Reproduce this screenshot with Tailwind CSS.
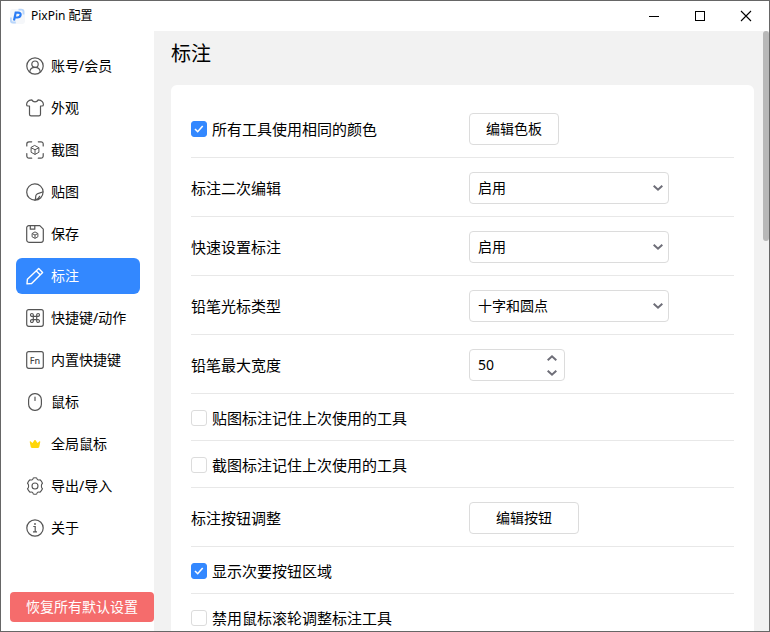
<!DOCTYPE html>
<html lang="zh-CN">
<head>
<meta charset="utf-8">
<meta name="viewport" content="width=device-width, initial-scale=1">
<title>PixPin 配置</title>
<script src="https://cdn.jsdelivr.net/npm/@tailwindcss/browser@4"></script>
</head>
<body class="flex h-screen flex-col overflow-hidden border border-[#666] bg-white font-['Noto_Sans','Noto_Sans_CJK_SC',sans-serif] text-sm text-black">

<header class="flex h-[30px] shrink-0 items-center pl-2">
  <svg class="mr-1.5 size-4" viewBox="0 0 16 16" fill="none" aria-hidden="true">
    <rect x="1" y="1" width="15" height="15" rx="3" fill="#f5f7fa"/>
    <path d="M9.500 1.700h2.700a2.300 2.300 0 0 1 2.300 2.300v2.500" stroke="#b9d6fb" stroke-width="1.800"/>
    <path d="M1.900 9.500v2.700a2.300 2.300 0 0 0 2.300 2.300h2.600" stroke="#b9d6fb" stroke-width="1.800"/>
    <path d="M5 12.500L6.700 4.600H9c2 0 2.900 1.100 2.600 2.500S10.100 9.500 8.300 9.500H6.100" stroke="#2b7df5" stroke-width="2.200"/>
  </svg>
  <span class="text-xs">PixPin 配置</span>
  <div class="ml-auto flex h-full">
    <button type="button" aria-label="最小化" class="grid w-[46px] place-items-center"><svg class="size-3" viewBox="0 0 12 12" stroke="#000" shape-rendering="crispEdges"><path d="M1 6.500h10"/></svg></button>
    <button type="button" aria-label="最大化" class="grid w-[46px] place-items-center"><svg class="size-3" viewBox="0 0 12 12" fill="none" stroke="#000" shape-rendering="crispEdges"><rect x="1.500" y="1.500" width="9" height="9"/></svg></button>
    <button type="button" aria-label="关闭" class="grid w-[46px] place-items-center"><svg class="size-3" viewBox="0 0 12 12" stroke="#000" stroke-width="1.100"><path d="M1 1l10 10M11 1L1 11"/></svg></button>
  </div>
</header>

<div class="flex min-h-0 flex-1">
  <aside class="flex w-[153px] shrink-0 flex-col justify-between pt-[17px] pb-[9px]">
    <nav class="flex flex-col gap-1.5 pr-3.5 pl-[15px]">
      <a href="#account" class="flex h-9 items-center gap-[7px] rounded-md pl-2.5">
        <svg class="size-[18px] shrink-0" viewBox="0 0 18 18" fill="none" stroke="#555" stroke-width="1.200"><circle cx="9" cy="9" r="8.200"/><circle cx="9" cy="7.200" r="3.200"/><path d="M3.700 15.100c.3-3 2.500-4.700 5.300-4.700s5 1.700 5.300 4.700"/></svg>
        账号/会员</a>
      <a href="#appearance" class="flex h-9 items-center gap-[7px] rounded-md pl-2.5">
        <svg class="size-[18px] shrink-0" viewBox="0 0 18 18" fill="none" stroke="#555" stroke-width="1.200" stroke-linejoin="round"><path d="M5.800.9c.7 1.300 1.800 1.900 3.200 1.900s2.500-.6 3.200-1.900c1.800.1 3.100.6 4.100 1.700.8.900 1.100 2 1.100 3.100 0 .8-.6 1.300-1.400 1.300h-1.500v8.300c0 1-.6 1.600-1.600 1.600H5.100c-1 0-1.600-.6-1.600-1.600V7H2C1.200 7 .6 6.500.6 5.700c0-1.100.3-2.200 1.100-3.100C2.700 1.500 4 1 5.800.9z"/></svg>
        外观</a>
      <a href="#capture" class="flex h-9 items-center gap-[7px] rounded-md pl-2.5">
        <svg class="size-[18px] shrink-0" viewBox="0 0 18 18" fill="none" stroke="#555" stroke-width="1.200" stroke-linecap="round" stroke-linejoin="round"><path d="M.8 5V3A2.200 2.200 0 0 1 3 .8h2.700M12.300.8H15A2.200 2.200 0 0 1 17.200 3v2M17.200 12.500V15a2.200 2.200 0 0 1-2.200 2.200h-2.700M5.700 17.200H3A2.200 2.200 0 0 1 .8 15v-2.500"/><path stroke-width="1" d="M9 4.600l3.900 2.100v4.600L9 13.400l-3.900-2.100V6.700zM5.300 6.900L9 8.700l3.700-1.800M9 8.700v4.500"/></svg>
        截图</a>
      <a href="#pin" class="flex h-9 items-center gap-[7px] rounded-md pl-2.5">
        <svg class="size-[18px] shrink-0" viewBox="0 0 18 18" fill="none" stroke="#555" stroke-width="1.200" stroke-linejoin="round"><path d="M17.100 8.800A8.200 8.200 0 1 0 9 17.200c1-1 .2-3.600 1.200-5.400 1.200-2.300 4.700-1.600 6.900-3z"/><path d="M17.100 8.800c0 4.600-3.500 8.400-8.100 8.400 1.600-.3 4-2.300 4.800-4.300"/></svg>
        贴图</a>
      <a href="#save" class="flex h-9 items-center gap-[7px] rounded-md pl-2.5">
        <svg class="size-[18px] shrink-0" viewBox="0 0 18 18" fill="none" stroke="#555" stroke-width="1.200" stroke-linejoin="round"><path d="M2.800.7h11l3.500 3.500v10.900a2.200 2.200 0 0 1-2.200 2.200H2.900a2.200 2.200 0 0 1-2.200-2.200V2.800A2.100 2.100 0 0 1 2.800.7z"/><path d="M4.300.8v3.400h4.500V.8"/><path stroke-width="1" d="M9 6.900l2.900 1.600v3.300L9 13.400l-2.900-1.600V8.500zM6.300 8.700L9 10l2.700-1.300M9 10v3.200"/></svg>
        保存</a>
      <a href="#annotate" aria-current="page" class="flex h-9 items-center gap-[7px] rounded-md bg-[#3388ff] pl-2.5 text-white">
        <svg class="size-[18px] shrink-0" viewBox="0 0 18 18" fill="none" stroke="#fff" stroke-width="1.400" stroke-linejoin="round"><path d="M1.400 12.300L12.700 1.500l3.900 3.900L5.600 16.500l-4.600.4zM10.300 3.900l3.900 3.900"/></svg>
        标注</a>
      <a href="#shortcuts" class="flex h-9 items-center gap-[7px] rounded-md pl-2.5">
        <svg class="size-[18px] shrink-0" viewBox="0 0 18 18" fill="none" stroke="#555" stroke-width="1.200"><rect x=".7" y=".7" width="16.600" height="16.600" rx="2"/><path d="M7.300 7.300h3.400v3.400H7.300zM7.300 7.300H6a1.400 1.400 0 1 1 1.300-1.400zM10.700 7.300V5.900a1.400 1.400 0 1 1 1.400 1.400zM10.700 10.700h1.400a1.400 1.400 0 1 1-1.400 1.400zM7.300 10.700v1.400A1.400 1.400 0 1 1 6 10.700z"/></svg>
        快捷键/动作</a>
      <a href="#builtin" class="flex h-9 items-center gap-[7px] rounded-md pl-2.5">
        <svg class="size-[18px] shrink-0" viewBox="0 0 18 18" aria-hidden="true"><rect x=".7" y=".7" width="16.600" height="16.600" rx="2" fill="none" stroke="#555" stroke-width="1.200"/><text x="9" y="12.500" text-anchor="middle" font-size="9" font-weight="500" fill="#444">Fn</text></svg>
        内置快捷键</a>
      <a href="#mouse" class="flex h-9 items-center gap-[7px] rounded-md pl-2.5">
        <svg class="size-[18px] shrink-0" viewBox="0 0 18 18" fill="none" stroke="#555" stroke-width="1.200" stroke-linecap="round"><rect x="2.600" y=".7" width="12.800" height="16.600" rx="6"/><path d="M9 4v3.500"/></svg>
        鼠标</a>
      <a href="#global-mouse" class="flex h-9 items-center gap-[7px] rounded-md pl-2.5">
        <svg class="size-[18px] shrink-0" viewBox="0 0 18 18" fill="#ffd60a"><path d="M3.800 6.600c.2-.4.600-.4.900-.1L6.500 8l1.900-2.700c.3-.5.900-.5 1.200 0L11.500 8l1.800-1.500c.3-.3.7-.3.900.1.100.2.100.4 0 .7l-.9 4.500c-.1.700-.5 1.200-1.300 1.200H6c-.8 0-1.200-.5-1.300-1.200l-.9-4.500c-.1-.3-.1-.5 0-.7z"/></svg>
        全局鼠标</a>
      <a href="#transfer" class="flex h-9 items-center gap-[7px] rounded-md pl-2.5">
        <svg class="size-[18px] shrink-0" viewBox="0 0 18 18" fill="none" stroke="#555" stroke-width="1.100" stroke-linejoin="round"><circle cx="9" cy="9" r="3"/><path d="M7.300 1c1.100-.4 2.300-.4 3.400 0 .2 1.600 1.600 2.500 3.300 1.800 1 .8 1.800 1.900 2.500 3.400-1.500 1.200-1.500 4.400 0 5.600-.7 1.500-1.500 2.600-2.500 3.400-1.700-.7-3.100.2-3.300 1.800-1.100.4-2.300.4-3.400 0-.2-1.600-1.600-2.500-3.300-1.800-1-.8-1.800-1.900-2.500-3.400 1.500-1.200 1.500-4.400 0-5.600C2.200 4.700 3 3.600 4 2.800c1.700.7 3.100-.2 3.300-1.800z"/></svg>
        导出/导入</a>
      <a href="#about" class="flex h-9 items-center gap-[7px] rounded-md pl-2.5">
        <svg class="size-[18px] shrink-0" viewBox="0 0 18 18" fill="none" stroke="#555" stroke-width="1.200"><circle cx="9" cy="9" r="8.200"/><path d="M7.300 7.500h1.900v5.300M7 12.900h4"/><circle cx="9" cy="5" r=".9" fill="#555" stroke="none"/></svg>
        关于</a>
    </nav>
    <button type="button" class="ml-[9px] h-[30px] rounded bg-[#f56c6c] text-white">恢复所有默认设置</button>
  </aside>

  <main class="min-w-0 flex-1 overflow-hidden bg-[#f2f2f2] pr-[9px] pl-[17px]">
    <h1 class="pt-2 pb-4 text-xl leading-[30px]">标注</h1>
    <form class="divide-y divide-[#e8e8e8] rounded-md bg-white px-5 pt-3.5 text-[15px] leading-5">
      <div class="grid grid-cols-[278px_1fr] items-center pt-3.5 pb-3">
        <label class="flex items-center gap-[5px]">
          <span class="grid size-4"><input type="checkbox" checked class="col-start-1 row-start-1 size-4 appearance-none rounded-[3px] border border-[#dcdcdc] bg-white checked:border-[#3388ff] checked:bg-[#3388ff]"><svg class="pointer-events-none col-start-1 row-start-1 size-4" viewBox="0 0 16 16" fill="none" stroke="#fff" stroke-width="1.600"><path d="M4 8l2.700 2.700L11.700 5"/></svg></span>
          所有工具使用相同的颜色</label>
        <button type="button" class="h-8 w-[90px] rounded border border-[#dcdcdc] text-sm">编辑色板</button>
      </div>
      <div class="grid grid-cols-[278px_1fr] items-center pt-3.5 pb-3">
        <label for="reedit">标注二次编辑</label>
        <div class="grid w-[200px] items-center">
          <select id="reedit" class="col-start-1 row-start-1 h-8 appearance-none rounded border border-[#dcdcdc] bg-white pl-2 text-sm"><option>启用</option><option>禁用</option></select>
          <svg class="pointer-events-none col-start-1 row-start-1 mr-[5px] h-2 w-3 justify-self-end" viewBox="0 0 12 8" fill="none" stroke="#6e6e78" stroke-width="2"><path d="M1.700 1.700L6 5.700l4.300-4"/></svg>
        </div>
      </div>
      <div class="grid grid-cols-[278px_1fr] items-center pt-3.5 pb-3">
        <label for="quick">快速设置标注</label>
        <div class="grid w-[200px] items-center">
          <select id="quick" class="col-start-1 row-start-1 h-8 appearance-none rounded border border-[#dcdcdc] bg-white pl-2 text-sm"><option>启用</option><option>禁用</option></select>
          <svg class="pointer-events-none col-start-1 row-start-1 mr-[5px] h-2 w-3 justify-self-end" viewBox="0 0 12 8" fill="none" stroke="#6e6e78" stroke-width="2"><path d="M1.700 1.700L6 5.700l4.300-4"/></svg>
        </div>
      </div>
      <div class="grid grid-cols-[278px_1fr] items-center pt-3.5 pb-3">
        <label for="cursor">铅笔光标类型</label>
        <div class="grid w-[200px] items-center">
          <select id="cursor" class="col-start-1 row-start-1 h-8 appearance-none rounded border border-[#dcdcdc] bg-white pl-2 text-sm"><option>十字和圆点</option></select>
          <svg class="pointer-events-none col-start-1 row-start-1 mr-[5px] h-2 w-3 justify-self-end" viewBox="0 0 12 8" fill="none" stroke="#6e6e78" stroke-width="2"><path d="M1.700 1.700L6 5.700l4.300-4"/></svg>
        </div>
      </div>
      <div class="grid grid-cols-[278px_1fr] items-center pt-3.5 pb-3">
        <label for="width">铅笔最大宽度</label>
        <div class="flex h-8 w-24 rounded border border-[#dcdcdc]">
          <input id="width" type="number" value="50" class="min-w-0 flex-1 [appearance:textfield] pl-2 text-sm outline-none [&::-webkit-inner-spin-button]:appearance-none">
          <div class="flex w-6 flex-col justify-center">
            <button type="button" aria-label="增加" class="grid h-[15px] place-items-center"><svg class="h-2 w-3" viewBox="0 0 12 8" fill="none" stroke="#6e6e78" stroke-width="2"><path d="M1.700 6.300L6 2.300l4.300 4"/></svg></button>
            <button type="button" aria-label="减少" class="grid h-[15px] place-items-center"><svg class="h-2 w-3" viewBox="0 0 12 8" fill="none" stroke="#6e6e78" stroke-width="2"><path d="M1.700 1.700L6 5.700l4.300-4"/></svg></button>
          </div>
        </div>
      </div>
      <div class="pt-3.5 pb-3">
        <label class="flex items-center gap-[5px]"><input type="checkbox" class="size-4 appearance-none rounded-[3px] border border-[#dcdcdc] bg-white checked:border-[#3388ff] checked:bg-[#3388ff]">贴图标注记住上次使用的工具</label>
      </div>
      <div class="pt-3.5 pb-3">
        <label class="flex items-center gap-[5px]"><input type="checkbox" class="size-4 appearance-none rounded-[3px] border border-[#dcdcdc] bg-white checked:border-[#3388ff] checked:bg-[#3388ff]">截图标注记住上次使用的工具</label>
      </div>
      <div class="grid grid-cols-[278px_1fr] items-center pt-3.5 pb-3">
        <span>标注按钮调整</span>
        <button type="button" class="h-8 w-[110px] rounded border border-[#dcdcdc] text-sm">编辑按钮</button>
      </div>
      <div class="pt-3.5 pb-3">
        <label class="flex items-center gap-[5px]">
          <span class="grid size-4"><input type="checkbox" checked class="col-start-1 row-start-1 size-4 appearance-none rounded-[3px] border border-[#dcdcdc] bg-white checked:border-[#3388ff] checked:bg-[#3388ff]"><svg class="pointer-events-none col-start-1 row-start-1 size-4" viewBox="0 0 16 16" fill="none" stroke="#fff" stroke-width="1.600"><path d="M4 8l2.700 2.700L11.700 5"/></svg></span>
          显示次要按钮区域</label>
      </div>
      <div class="pt-3.5 pb-3">
        <label class="flex items-center gap-[5px]"><input type="checkbox" class="size-4 appearance-none rounded-[3px] border border-[#dcdcdc] bg-white checked:border-[#3388ff] checked:bg-[#3388ff]">禁用鼠标滚轮调整标注工具</label>
      </div>
    </form>
  </main>
  <div class="w-1.5 shrink-0 bg-[#f2f2f2]" aria-hidden="true"><div class="h-[35%] rounded-full bg-[#b8b8b8]"></div></div>
</div>
</body>
</html>
